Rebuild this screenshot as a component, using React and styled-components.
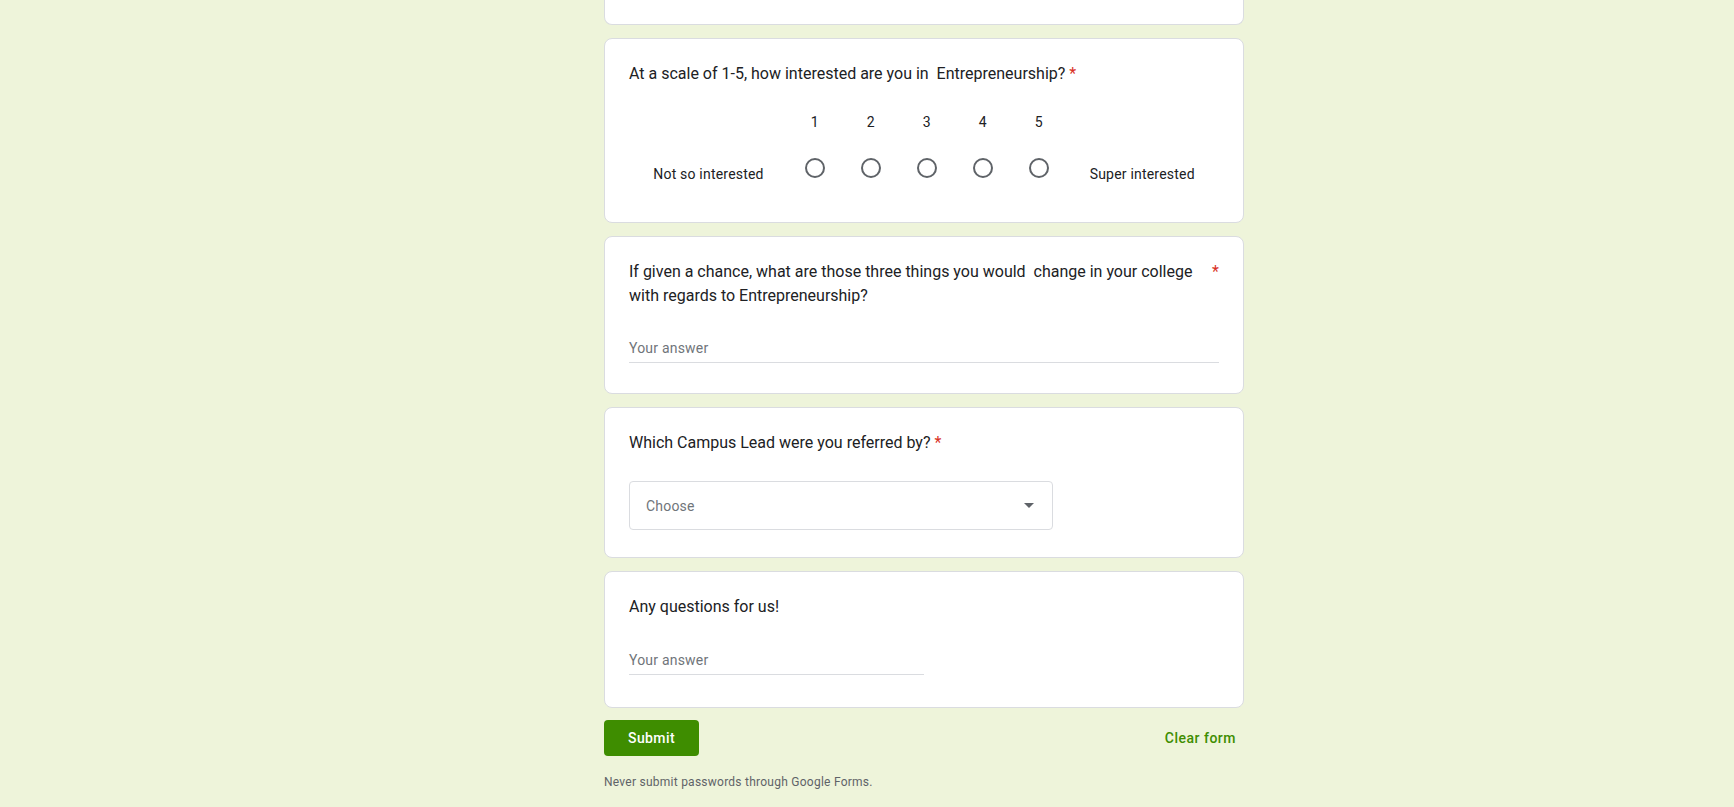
import React from "react";
import styled, { createGlobalStyle } from "styled-components";

const GlobalStyle = createGlobalStyle`
  html, body {
    margin: 0;
    padding: 0;
    background-color: #eef4da;
    font-family: Roboto, "Liberation Sans", Arial, sans-serif;
    overflow: hidden;
  }
`;

const Page = styled.div`
  min-height: 807px;
  background-color: #eef4da;
`;

const Column = styled.div`
  width: 640px;
  margin-left: calc(50% - 263px);
  display: flex;
  flex-direction: column;
  gap: 13px;
`;

const Card = styled.div`
  box-sizing: border-box;
  background-color: #fff;
  border: 1px solid #dadce0;
  border-radius: 8px;
  padding: 23px 24px 24px;

  ${(props) =>
    props.$clipped &&
    `
    height: 25px;
    padding: 0;
    border-top: none;
    border-radius: 0 0 8px 8px;
  `}
`;

const Title = styled.div`
  display: flex;
  font-size: 16px;
  line-height: 24px;
  letter-spacing: 0;
  color: #202124;
`;

const TitleText = styled.span`
  white-space: pre-wrap;
`;

const Required = styled.span`
  color: #d93025;
  padding-left: 0.25em;
`;

const ScaleRow = styled.div`
  display: flex;
  justify-content: center;
  align-items: flex-end;
  margin: 26px 0 10px;
`;

const EndLabel = styled.div`
  font-size: 14px;
  line-height: 20px;
  letter-spacing: 0.2px;
  color: #202124;
  padding: 0 23px;
  margin-bottom: 4px;
`;

const ScaleOption = styled.label`
  width: 56px;
  display: flex;
  flex-direction: column;
  align-items: center;
  gap: 16px;
`;

const ScaleNumber = styled.span`
  font-size: 14px;
  line-height: 20px;
  letter-spacing: 0.2px;
  color: #202124;
`;

const RadioHolder = styled.span`
  height: 40px;
  width: 40px;
  display: flex;
  align-items: center;
  justify-content: center;
`;

const Radio = styled.span`
  box-sizing: border-box;
  width: 20px;
  height: 20px;
  border: 2px solid #5f6368;
  border-radius: 50%;
`;

const Answer = styled.div`
  width: ${(props) => props.$width || "100%"};
  margin: ${(props) => props.$before || 15}px 0 ${(props) => props.$after || 6}px;
  padding: 15px 0 4px;
  border-bottom: 1px solid #dadce0;
  font-size: 14px;
  line-height: 20px;
  letter-spacing: 0.2px;
  color: #70757a;
`;

const Select = styled.div`
  box-sizing: border-box;
  width: 424px;
  height: 49px;
  margin: 26px 0 3px;
  border: 1px solid #dadce0;
  border-radius: 4px;
  display: flex;
  align-items: center;
  justify-content: space-between;
  padding: 0 18px 0 16px;
  font-size: 14px;
  letter-spacing: 0.2px;
  color: #70757a;
`;

const Arrow = styled.span`
  width: 0;
  height: 0;
  border-left: 5px solid transparent;
  border-right: 5px solid transparent;
  border-top: 5px solid #5f6368;
`;

const Actions = styled.div`
  display: flex;
  align-items: center;
  justify-content: space-between;
  margin-top: -1px;
`;

const SubmitButton = styled.button`
  height: 36px;
  min-width: 95px;
  padding: 0 24px;
  border: none;
  border-radius: 4px;
  background-color: #3e8d00;
  color: #fff;
  font-family: Roboto, "Liberation Sans", Arial, sans-serif;
  font-size: 14px;
  font-weight: 500;
  letter-spacing: 0.4px;
  cursor: pointer;
`;

const ClearButton = styled.button`
  background: none;
  border: none;
  padding: 0 8px;
  color: #3e8d00;
  font-family: Roboto, "Liberation Sans", Arial, sans-serif;
  font-size: 14px;
  font-weight: 500;
  letter-spacing: 0.5px;
  cursor: pointer;
`;

const Footer = styled.div`
  margin-top: 5px;
  font-size: 12px;
  line-height: 16px;
  letter-spacing: 0.25px;
  color: #5f6368;
`;

const scale = [1, 2, 3, 4, 5];

function App() {
  return (
    <Page>
      <GlobalStyle />
      <Column>
        <Card $clipped />

        <Card>
          <Title>
            <TitleText>
              At a scale of 1-5, how interested are you in  Entrepreneurship?
            </TitleText>
            <Required>*</Required>
          </Title>
          <ScaleRow>
            <EndLabel>Not so interested</EndLabel>
            {scale.map((n) => (
              <ScaleOption key={n}>
                <ScaleNumber>{n}</ScaleNumber>
                <RadioHolder>
                  <Radio />
                </RadioHolder>
              </ScaleOption>
            ))}
            <EndLabel>Super interested</EndLabel>
          </ScaleRow>
        </Card>

        <Card>
          <Title>
            <TitleText>
              If given a chance, what are those three things you would  change
              in your college with regards to Entrepreneurship?
            </TitleText>
            <Required>*</Required>
          </Title>
          <Answer>Your answer</Answer>
        </Card>

        <Card>
          <Title>
            <TitleText>Which Campus Lead were you referred by?</TitleText>
            <Required>*</Required>
          </Title>
          <Select>
            Choose
            <Arrow />
          </Select>
        </Card>

        <Card>
          <Title>
            <TitleText>Any questions for us!</TitleText>
          </Title>
          <Answer $width="50%" $before={16} $after={8}>
            Your answer
          </Answer>
        </Card>

        <Actions>
          <SubmitButton>Submit</SubmitButton>
          <ClearButton>Clear form</ClearButton>
        </Actions>

        <Footer>Never submit passwords through Google Forms.</Footer>
      </Column>
    </Page>
  );
}

export default App;
